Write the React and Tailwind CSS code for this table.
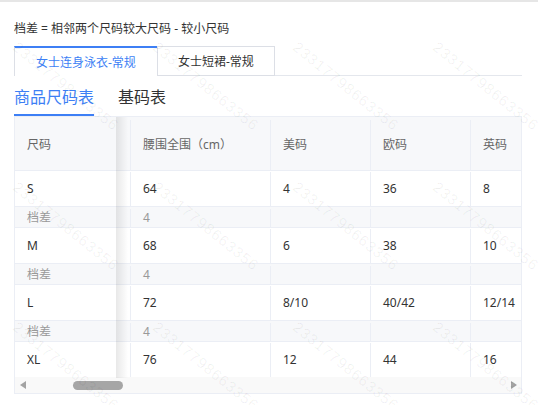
import React from "react";

const rows = [
  { t: "n", c: ["S", "64", "4", "36", "8"] },
  { t: "d", c: ["档差", "4", "", "", ""] },
  { t: "n", c: ["M", "68", "6", "38", "10"] },
  { t: "d", c: ["档差", "4", "", "", ""] },
  { t: "n", c: ["L", "72", "8/10", "40/42", "12/14"] },
  { t: "d", c: ["档差", "4", "", "", ""] },
  { t: "n", c: ["XL", "76", "12", "44", "16"], last: true },
];

const widths = ["w-[140px]", "w-[100px]", "w-[100px]", "w-[51px]"];

function Row({ cells, kind, last }) {
  const h =
    kind === "h"
      ? "h-[54px] bg-[#f7f8fa] text-[#666] pt-[3px]"
      : kind === "d"
      ? "h-[21px] bg-[#f7f8fa] text-[#999] pt-[2px]"
      : last
      ? "h-[35px] bg-white text-[#333] pt-[1px]"
      : "h-[36px] bg-white text-[#333] pt-[1px]";
  return (
    <div className={`flex ${h} ${last ? "" : "border-b border-[#ebeef5]"}`}>
      <div className="w-[101px] shrink-0 pl-[12px] flex items-center">{cells[0]}</div>
      <div className="w-[14px] shrink-0" />
      {cells.slice(1).map((c, i) => (
        <div
          key={i}
          className={`${widths[i]} shrink-0 border-l border-[#ebeef5] pl-[12px] flex items-center whitespace-nowrap overflow-hidden`}
        >
          {c}
        </div>
      ))}
    </div>
  );
}

export default function App() {
  const marks = [];
  for (let j = 0; j < 3; j++) {
    for (let i = 0; i < 4; i++) {
      marks.push([20 + 140 * i, 37 + 140 * j]);
    }
  }
  return (
    <div
      className="relative w-[538px] h-[405px] overflow-hidden bg-white border-t-2 border-[#e6e6e6] pl-[14px] pr-[16px]"
      style={{ fontFamily: '"Noto Sans", "Noto Sans CJK SC", sans-serif' }}
    >
      <div className="mt-[19px] h-[16px] leading-[16px] text-[12px] text-[#333]">
        档差 = 相邻两个尺码较大尺码 - 较小尺码
      </div>

      <div className="mt-[9px] flex h-[30px] text-[12px] leading-[16px]">
        <div className="px-[21px] pt-[1px] border-t-2 border-l border-t-[#3d7ff5] border-l-[#dcdfe6] flex items-center text-[#3d7ff5]">
          女士连身泳衣-常规
        </div>
        <div className="px-[20px] pt-[1px] border border-[#dcdfe6] flex items-center text-[#333]">
          女士短裙-常规
        </div>
        <div className="flex-1 border-b border-[#e4e7ed]" />
      </div>

      <div className="flex gap-[24px] h-[40px] text-[16px] leading-[22px]">
        <div className="pt-[10px] pb-[6px] border-b-2 border-[#3d7ff5] text-[#3d7ff5] h-[40px]">
          商品尺码表
        </div>
        <div className="pt-[10px] text-[#333]">基码表</div>
      </div>

      <div className="relative border border-[#ebeef5] text-[12px] leading-[16px] overflow-hidden">
        <Row cells={["尺码", "腰围全围（cm）", "美码", "欧码", "英码"]} kind="h" />
        {rows.map((r, i) => (
          <Row key={i} cells={r.c} kind={r.t} last={r.last} />
        ))}
        <div className="h-[16px] bg-[#f9f9f9] flex items-center relative">
          <div className="ml-[5px] w-0 h-0 border-y-[4px] border-y-transparent border-r-[6px] border-r-[#a3a3a3]" />
          <div className="ml-[47px] w-[50px] h-[9px] rounded-full bg-[#a6a6a6]" />
          <div className="ml-auto mr-[4px] w-0 h-0 border-y-[4px] border-y-transparent border-l-[6px] border-l-[#a3a3a3]" />
        </div>
        <div
          className="absolute left-[101px] top-0 w-[12px] h-[261px] pointer-events-none"
          style={{ background: "linear-gradient(to right, rgba(0,0,0,0.09), rgba(0,0,0,0))" }}
        />
      </div>

      <div className="absolute inset-0 pointer-events-none">
        {marks.map(([x, y], k) => (
          <span
            key={k}
            className="absolute text-[15px] leading-[15px] tracking-[1px] text-[rgba(0,0,0,0.06)] whitespace-nowrap origin-top-left rotate-[39deg]"
            style={{ left: x, top: y, fontFamily: '"Liberation Sans", sans-serif' }}
          >
            23317798663356
          </span>
        ))}
      </div>
    </div>
  );
}
